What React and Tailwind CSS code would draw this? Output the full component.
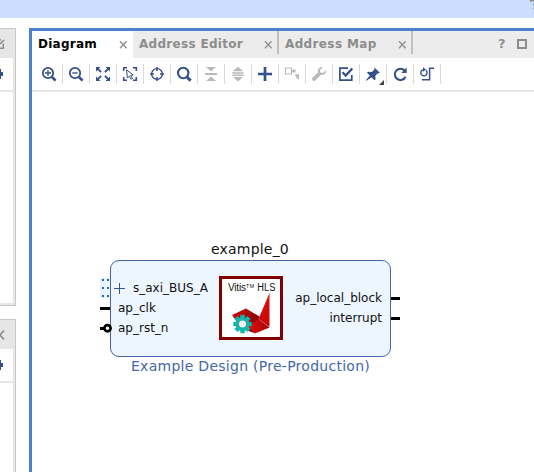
import React from "react";

const NAVY = "#34508a";
const GRAY = "#b9b9b9";

function Icon({ children, color = NAVY, width = 1.6 }) {
  return (
    <svg width="16" height="16" viewBox="0 0 16 16" fill="none" stroke={color} strokeWidth={width} className="block shrink-0">
      {children}
    </svg>
  );
}

const icons = [
  <Icon><circle cx="7" cy="7" r="5.2" strokeWidth="1.8" /><path d="M4 7h6M7 4v6" strokeWidth="1.3" /><path d="M11 11l3.6 3.6" strokeWidth="2.6" /></Icon>,
  <Icon><circle cx="7" cy="7" r="5.2" strokeWidth="1.8" /><path d="M4.3 7h5.4" strokeWidth="1.4" /><path d="M11 11l3.6 3.6" strokeWidth="2.6" /></Icon>,
  <Icon>
    <path d="M2.500 2.500l3.600 3.600M13.500 2.500l-3.600 3.600M2.500 13.500l3.600-3.600M13.500 13.500l-3.600-3.600" strokeWidth="1.8" />
    <path d="M1 1h4.500L1 5.500zM15 1v4.500L10.500 1zM1 15v-4.500L5.500 15zM15 15h-4.500L15 10.500z" fill={NAVY} stroke="none" />
  </Icon>,
  <Icon>
    <path d="M1.700 5V1.700H5M11 1.700h3.300V5M14.300 11v3.300H11M5 14.300H1.700V11" />
    <path d="M4.600 3.800l6.600 5.200-2.600.5 1.900 3-1.300.8-1.900-3.100-1.900 1.700z" strokeWidth="1" />
  </Icon>,
  <Icon><circle cx="8" cy="8" r="5.400" strokeWidth="1.400" /><path d="M8 1v4M8 11v4M1 8h4M11 8h4" strokeWidth="1.500" /></Icon>,
  <Icon><circle cx="7.200" cy="7" r="5.200" strokeWidth="2.100" /><path d="M11 11l3.600 3.600" strokeWidth="3" /></Icon>,
  <Icon color={GRAY}><path d="M2 8h12" strokeWidth="2" /><path d="M3 1h10L8 5.500zM8 10.500l5 4.500H3z" fill={GRAY} stroke="none" /></Icon>,
  <Icon color={GRAY}><path d="M2.400 6.900h11.200M2.400 9.300h11.200" strokeWidth="1.500" /><path d="M8 .8L13 5.200H3zM3 11h10l-5 4.400z" fill={GRAY} stroke="none" /></Icon>,
  <Icon><path d="M1 8h14M8 1v14" strokeWidth="2.700" /></Icon>,
  <Icon color={GRAY}><path d="M1.500 2h6v6h-6z" strokeWidth="1.100" /><path d="M7.500 5h2" /><path d="M8.500 3.500h3v3h-3z" fill={GRAY} stroke="none" /><path d="M15 13l-3-3" /><path d="M10.300 8.300h4.700v4.500z" fill={GRAY} stroke="none" /></Icon>,
  <Icon color={GRAY}><path d="M15 4.300l-3 2.600-2.600-.5-.4-2.400 2.700-2.900C8.300 .7 6.300 3.400 7.200 6.200L1.300 12c-1.100 1.500 1.200 3.800 2.700 2.700l5.900-5.900c3 .7 5.700-1.500 5.100-4.500z" fill={GRAY} stroke="none" /></Icon>,
  <Icon><path d="M10 2.200H1.900v11.900h11.900V9" strokeWidth="1.700" /><path d="M4.500 6.300l3.200 3.200 6.600-7" strokeWidth="2.300" /></Icon>,
  <Icon>
    <path d="M9.500 1.500l5.300 5.300-1.500.8-.8-.1-2.200 2.200.2 3.700-1 .9-3-3L1.500 14.800l-.6-.6L4.800 9.500 2 6.700l1-1 3.800.2 2.500-2.200z" fill={NAVY} stroke="none" />
  </Icon>,
  <Icon><path d="M12.700 4.700a5.600 5.600 0 1 0 .8 6" strokeWidth="2.100" /><path d="M14.700 1.500v5.500H9.200z" fill={NAVY} stroke="none" /></Icon>,
  <Icon><path d="M4 3.800a3.100 3.100 0 1 0 2.900.6" strokeWidth="1.400" /><path d="M4 1.300l3 2.300-3 2.200z" fill={NAVY} stroke="none" /><path d="M3 13.700h7.600V2.200H15" strokeWidth="1.500" /></Icon>,
];

function Close() {
  return (
    <svg width="9" height="9" viewBox="0 0 9 9" className="block" stroke="#949494" strokeWidth="1.500">
      <path d="M1 1.200l6.600 7M7.600 1.200L1 8.200" />
    </svg>
  );
}

function Tab({ label, className, active, labelClass }) {
  return (
    <div className={`flex h-[27px] shrink-0 items-start justify-between ${active ? "bg-white text-black" : "text-[#8c8c8c]"} ${className}`}>
      <span className={`mt-[5px] whitespace-nowrap text-[12px] leading-4 font-bold ${labelClass}`}>{label}</span>
      <span className="mt-[9px]"><Close /></span>
    </div>
  );
}

function Toolbar() {
  return (
    <div className="flex h-[34px] shrink-0 border-b-2 border-[#e6e6e6] pl-1">
      {icons.map((icon, i) => (
        <div key={i} className="relative mt-[6px] flex h-5 w-[27px] shrink-0 items-center border-r border-[#d9d9d9] pl-[5px]">
          {icon}
          {i === 12 && <span className="absolute -bottom-px right-[2px] h-[5px] w-[5px] bg-[#444] [clip-path:polygon(100%_0,100%_100%,0_100%)]" />}
        </div>
      ))}
    </div>
  );
}

function HlsLogo() {
  return (
    <svg width="64" height="64" viewBox="0 0 64 64" className="block">
      <defs>
        <linearGradient id="spike" x1="0" y1="0" x2="0.3" y2="1"><stop offset="0" stopColor="#f01010" /><stop offset="1" stopColor="#c40808" /></linearGradient>
        <linearGradient id="wing" x1="0" y1="0" x2="1" y2="0.6"><stop offset="0" stopColor="#d80c0c" /><stop offset="1" stopColor="#7c0505" /></linearGradient>
        <linearGradient id="base" x1="0" y1="0" x2="1" y2="0"><stop offset="0" stopColor="#e01010" /><stop offset="0.7" stopColor="#b80808" /><stop offset="1" stopColor="#860404" /></linearGradient>
      </defs>
      <path d="M1.500 1.500h61v61h-61z" fill="#fff" stroke="#800000" strokeWidth="3" />
      <g fill="#111" fontFamily="Liberation Sans, Arial, sans-serif">
        <text x="9" y="15" fontSize="10" textLength="18">Vitis</text>
        <text x="27" y="11.500" fontSize="5.200" textLength="8">TM</text>
        <text x="38.300" y="15" fontSize="10" textLength="18" lengthAdjust="spacingAndGlyphs">HLS</text>
      </g>
      <path d="M13 39l14-6.500 13.500 8L35 57 22 52z" fill="url(#wing)" />
      <path d="M50.500 17v34L39.500 43z" fill="url(#spike)" />
      <path d="M39.500 43l11 8.500L36 57.500 29 50z" fill="url(#base)" />
      <g fill="#14b5ac">
        {[0, 45, 90, 135, 180, 225, 270, 315].map((a) => (
          <path key={a} d="M21.300 38.800h4.400v6h-4.400z" transform={`rotate(${a} 23.500 48)`} />
        ))}
        <circle cx="23.500" cy="48" r="7" />
      </g>
      <circle cx="23.500" cy="48" r="3.500" fill="#f8eded" />
    </svg>
  );
}

function Block() {
  return (
    <div className="absolute left-[68px] top-[148px] h-[136px] w-[302px] text-[12px] leading-4 text-[#111]">
      <span className="absolute left-[111px] top-0 whitespace-nowrap text-[14px] leading-[18px] tracking-[0.2px]">example_0</span>
      <svg width="10" height="20" viewBox="0 0 10 20" className="absolute left-0 top-[38px]">
        <path d="M0 0h10v20H0z" fill="#e7f3ff" />
        <path d="M2 2h7M2 10h7M2 18h7" stroke="#2868ac" strokeWidth="2" strokeDasharray="2 3" />
      </svg>
      <div className="absolute left-[10px] top-[20px] h-[97px] w-[281px] rounded-[9px] border border-[#4467a8] bg-[#edf5ff]">
        <svg width="11" height="11" viewBox="0 0 11 11" className="absolute left-[3px] top-[22px]"><path d="M0 5.500h11M5.500 0v11" stroke="#34588f" /></svg>
        <span className="absolute left-[22px] top-[19px] whitespace-nowrap">s_axi_BUS_A</span>
        <span className="absolute left-[7px] top-[39px] whitespace-nowrap">ap_clk</span>
        <span className="absolute left-[7px] top-[59px] whitespace-nowrap">ap_rst_n</span>
        <div className="absolute left-[108px] top-[15px]"><HlsLogo /></div>
        <span className="absolute right-[8px] top-[29px] whitespace-nowrap">ap_local_block</span>
        <span className="absolute right-[8px] top-[49px] whitespace-nowrap">interrupt</span>
      </div>
      <svg width="302" height="30" viewBox="0 0 302 30" className="absolute left-0 top-[55px]">
        <path d="M0 13.500h10M291 3.500h9M291 23.500h9" stroke="#000" strokeWidth="3" />
      </svg>
      <svg width="13" height="10" viewBox="0 0 13 10" className="absolute left-0 top-[83px]">
        <path d="M0 5.500h4" stroke="#000" strokeWidth="3" />
        <circle cx="7.500" cy="5.200" r="3.100" fill="#fff" stroke="#000" strokeWidth="2.700" />
      </svg>
      <span className="absolute left-[31px] top-[117px] whitespace-nowrap text-[14px] leading-[18px] tracking-[0.27px] text-[#4467a8]">Example Design (Pre-Production)</span>
    </div>
  );
}

function SidePanel({ className, top }) {
  return (
    <div className={`flex w-4 flex-col border-r border-t border-[#c8c8c8] bg-[#e6e6e6] ${className}`}>
      <div className="h-[29px] shrink-0 pt-[10px]">
        {top ? (
          <svg width="5" height="10" viewBox="0 0 5 10" fill="none" stroke="#8c8c8c" strokeWidth="1.500"><path d="M0 1h1M3.300 4.500v4.700H0M0 5l4-4" /></svg>
        ) : (
          <svg width="5" height="10" viewBox="0 0 5 10" fill="none" stroke="#8c8c8c" strokeWidth="1.700"><path d="M4 .5L0 5l4 4.500" /></svg>
        )}
      </div>
      <div className="mr-[2px] h-8 shrink-0 bg-white pt-[10px]">
        <svg width="4" height="12" viewBox="0 0 4 12"><path d="M0 1h1v3h2v4H1v3H0z" fill={NAVY} /></svg>
      </div>
      <div className="mr-[2px] mt-[2px] flex-1 bg-white" />
    </div>
  );
}

export default function App() {
  return (
    <div className="flex h-[472px] w-[534px] flex-col overflow-hidden bg-white font-['DejaVu_Sans',sans-serif]">
      <div className="h-[18px] shrink-0 bg-[#ccdeff]">
        <svg width="534" height="18" viewBox="0 0 534 18" className="block" fill="none" stroke="#8c8c8c" strokeWidth="2">
          <path d="M530 1q2-1 4-.8" />
          <path d="M533.500 3v3M533.500 7.500v2" strokeWidth="1" opacity="0.6" />
        </svg>
      </div>
      <div className="flex min-h-0 flex-1 pt-[10px]">
        <div className="flex w-[29px] shrink-0 flex-col gap-[13px]">
          <SidePanel top className="h-[278px] border-b pb-[2px]" />
          <SidePanel className="flex-1" />
        </div>
        <main className="flex min-w-0 flex-1 flex-col border-l-[3px] border-t-[3px] border-[#4a80d0]">
          <div className="flex h-[27px] shrink-0 bg-[#ececec]">
            <Tab active label="Diagram" className="w-[101px] pl-[6px] pr-[5px]" labelClass="tracking-[0.25px]" />
            <Tab label="Address Editor" className="w-[144px] pl-[6px] pr-[4px]" labelClass="tracking-[0.3px]" />
            <div className="h-[23px] w-[2px] shrink-0 bg-[#c0c0c0]" />
            <Tab label="Address Map" className="w-[132px] pl-[6px] pr-[4px]" labelClass="tracking-[0.37px]" />
            <div className="h-[23px] w-[2px] shrink-0 bg-[#c0c0c0]" />
            <div className="ml-auto flex pr-[7px] pt-[8px]">
              <span className="-mt-[3px] w-[19px] text-[13px] font-bold leading-4 text-[#8c8c8c]">?</span>
              <span className="h-[10px] w-[10px] border-2 border-[#8c8c8c]" />
            </div>
          </div>
          <Toolbar />
          <div className="relative min-h-0 flex-1"><Block /></div>
        </main>
      </div>
    </div>
  );
}
